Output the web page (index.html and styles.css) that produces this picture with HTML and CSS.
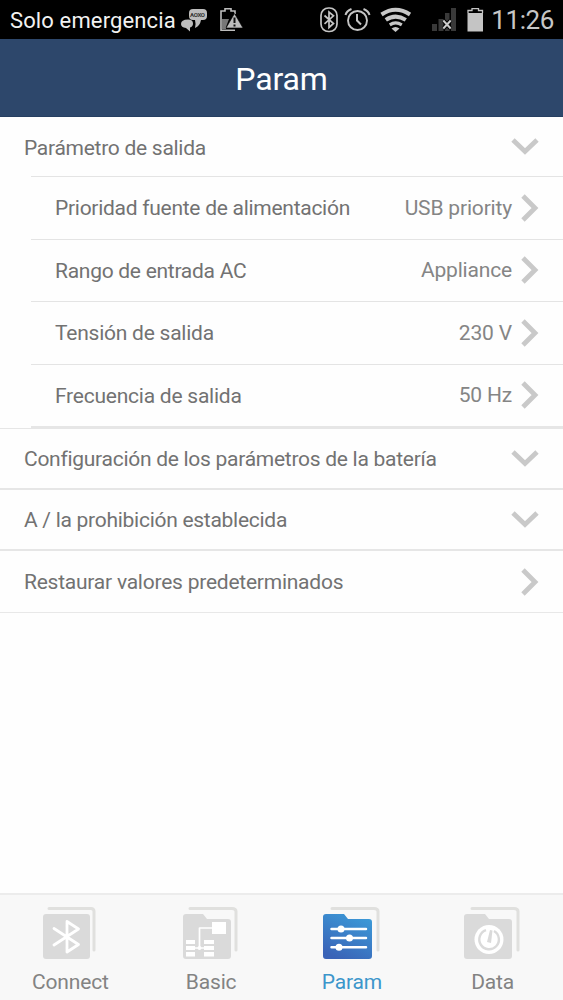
FILE: index.html
```html
<!DOCTYPE html>
<html lang="es">
<head>
<meta charset="utf-8">
<title>Param</title>
<link rel="stylesheet" href="styles.css">
</head>
<body>
<svg class="defs" width="0" height="0">
  <symbol id="right" viewBox="0 0 18 28"><path d="M2 2 14 14 2 26"/></symbol>
  <symbol id="down" viewBox="0 0 28 18"><path d="M2 2 14 13.5 26 2"/></symbol>
</svg>
<div class="statusbar">
  <span class="carrier">Solo emergencia</span>
  <svg class="notify" width="64" height="39" viewBox="180 0 64 39">
    <path fill="#bdbdbd" d="M193 9h10q4 0 4 4v3q0 4-4 4h-2q-1 6-6 8 1-5 0-8h-2q-4 0-4-4v-3q0-4 4-4z"/>
    <path fill="#bdbdbd" d="M188 19.500q5 0 5 4 0 3-3 4v4l-4-3.500q-5-.5-5-4 0-4.500 7-4.500z"/>
    <text x="190" y="17" class="bubble" textLength="15">AOXO</text>
    <path fill="none" stroke="#bdbdbd" stroke-width="1.600" d="M235 30.200h-14V11h4V8.800h6V11h4v3"/>
    <path fill="#777" d="M222 19h7l-3 8v2h-4z"/>
    <path fill="#bdbdbd" stroke="#000" stroke-width=".6" d="M234.500 13.500 243 28h-17z"/>
    <path stroke="#111" stroke-width="2" d="M234.500 17.500v5.500M234.500 24.500v2"/>
  </svg>
  <svg class="system" width="168" height="39" viewBox="319 0 168 39">
    <g fill="none" stroke="#c4c4c4" stroke-width="1.700">
      <rect x="321" y="8" width="16" height="23.500" rx="7.500"/>
      <path d="m324.500 15.500 9 8-4.500 4V12l4.500 3.800-9 8"/>
      <circle cx="357.500" cy="20.500" r="9.500" stroke-width="1.900"/>
      <path d="M357 14v6.500l4 4M345.500 15q1-4 6-6M363.500 9q5 2 6 6" stroke-width="2"/>
    </g>
    <g fill="none" stroke="#c8c8c8" stroke-width="4">
      <path d="M381.500 14.500q14-9.500 28.500 0"/>
      <path d="M385.800 19.900q9.700-6.600 20 0"/>
      <path d="M389.800 24.800q5.700-3.800 12 0" stroke-width="3.200"/>
    </g>
    <path fill="#c8c8c8" d="m391.500 28.500q4-3 8 0l-4 3.500z"/>
    <path fill="#393939" d="M432 24h5v7h-5zm6.500-5h5v12h-5zm6.500-6h4.500v18H445zm6-5h5v23h-5z"/>
    <path d="m443.500 20.500 7 8m0-8-7 8" stroke="#000" stroke-width="4"/>
    <path d="m443.300 20.500 7.400 8m0-8-7.400 8" stroke="#ccc" stroke-width="2"/>
    <path fill="#c4c4c4" d="M467.500 13H483v18.500h-15.500z"/>
    <path fill="none" stroke="#c4c4c4" stroke-width="1.300" d="M468 13v-2.500h4V8.700h6.500v1.800h4V13"/>
  </svg>
  <time class="clock">11:26</time>
</div>
<header class="title"><h1>Param</h1></header>
<main class="list">
  <section class="group">
    <div class="row first"><span>Parámetro de salida</span><svg class="chev down"><use href="#down"/></svg></div>
    <div class="children">
      <div class="row"><span>Prioridad fuente de alimentación</span><span class="value">USB priority</span><svg class="chev"><use href="#right"/></svg></div>
      <div class="row"><span>Rango de entrada AC</span><span class="value">Appliance</span><svg class="chev"><use href="#right"/></svg></div>
      <div class="row"><span class="wide">Tensión de salida</span><span class="value">230 V</span><svg class="chev"><use href="#right"/></svg></div>
      <div class="row"><span class="wide">Frecuencia de salida</span><span class="value">50 Hz</span><svg class="chev"><use href="#right"/></svg></div>
    </div>
  </section>
  <div class="row top battery"><span>Configuración de los parámetros de la batería</span><svg class="chev down"><use href="#down"/></svg></div>
  <div class="row top"><span>A / la prohibición establecida</span><svg class="chev down"><use href="#down"/></svg></div>
  <div class="row top last"><span class="wide">Restaurar valores predeterminados</span><svg class="chev"><use href="#right"/></svg></div>
</main>
<nav class="tabs">
  <div class="tab">
    <svg width="60" height="58" viewBox="0 0 60 58">
      <path class="back" d="M9 4.500h42q3 0 3 3V46"/>
      <rect class="fill" x="3" y="10" width="47" height="45" rx="3"/>
      <path class="ink" stroke-width="2.800" d="M14 24.500 38.500 40.500 27 48V17.500L38.500 25 14 41"/>
    </svg><span>Connect</span>
  </div>
  <div class="tab">
    <svg width="60" height="58" viewBox="0 0 60 58">
      <path class="back" d="M9 4.500h42q4 0 4 3V46"/>
      <path class="fill" d="M5 10h17l4 5h21q3 0 3 3v34q0 3-3 3H5q-3 0-3-3V13q0-3 3-3z"/>
      <path fill="#fff" d="M31 18h14v12H31zM5 36h9v4H5zm0 6h9v4H5zm0 6h9v4.500H5zM23 36h10v4H23zm0 6h10v4H23zm0 6h10v4.500H23z"/>
      <path class="ink" stroke-width="1.700" d="M31 24H18.500v20M14 44h9"/><circle cx="18.500" cy="44" r="2" fill="#fff"/>
    </svg><span>Basic</span>
  </div>
  <div class="tab active">
    <svg width="60" height="58" viewBox="0 0 60 58">
      <defs><linearGradient id="blue" x1=".8" y1="0" x2=".3" y2="1"><stop offset="0" stop-color="#3c9bd8"/><stop offset="1" stop-color="#3a63b7"/></linearGradient></defs>
      <path class="back" d="M10 4.500h42q4 0 4 3V46"/>
      <path fill="url(#blue)" d="M4 10h18l4 5h21q3 0 3 3v34q0 3-3 3H4q-3 0-3-3V13q0-3 3-3z"/>
      <path class="ink" stroke-width="2.500" stroke-linecap="butt" d="M9.500 25H44M9.500 34H44M9.500 43.200H44"/>
      <g fill="#fff"><circle cx="19" cy="25" r="3.500"/><circle cx="27.500" cy="34" r="3.500"/><circle cx="17" cy="43.200" r="3.500"/></g>
    </svg><span>Param</span>
  </div>
  <div class="tab">
    <svg width="60" height="58" viewBox="0 0 60 58">
      <path class="back" d="M9 4.500h42q4 0 4 3V46"/>
      <path class="fill" d="M4 10h18l4 5h20q3 0 3 3v34q0 3-3 3H4q-3 0-3-3V13q0-3 3-3z"/>
      <circle cx="26" cy="35.500" r="14.500" fill="#fff"/>
      <path fill="none" stroke="#dadada" stroke-width="2.400" d="M23 26.200A9.800 9.800 0 1 0 31 27"/>
      <path fill="#dadada" d="m27 26 2.500.5-1.500 12.500-4-1z"/>
    </svg><span>Data</span>
  </div>
</nav>
</body>
</html>
```
FILE: styles.css
```css
* { box-sizing: border-box; }
body {
  margin: 0;
  height: 1000px;
  display: flex;
  flex-direction: column;
  overflow: hidden;
  background: #fefefe;
  color: #727272;
  font-family: Roboto, sans-serif;
  font-size: 21px;
}
.defs { position: absolute; }
.statusbar {
  height: 39px;
  flex: none;
  display: flex;
  align-items: center;
  padding: 1px 9px 0 10px;
  background: #000;
  color: #f2f2f2;
  white-space: nowrap;
}
.carrier { width: 170px; font-size: 22px; letter-spacing: .13px; }
.notify, .system { flex: none; margin-top: -1px; }
.bubble { font-size: 6px; font-weight: 700; fill: #333; }
.system { margin-left: auto; }
.clock { width: 67px; text-align: right; color: #c6c6c6; font-size: 26px; letter-spacing: -.4px; }
.title {
  height: 78px;
  flex: none;
  display: grid;
  place-items: center;
  padding-top: 2px;
  background: #2d476b;
  border-bottom: 1px solid #263f61;
}
.title h1 { margin: 0; color: #fff; font-size: 32px; font-weight: 400; letter-spacing: -.15px; }
.list { flex: 1; }
.row {
  display: flex;
  align-items: center;
  height: 62.5px;
  padding: 0 24px;
  white-space: nowrap;
}
.row > span { padding-top: 1px; letter-spacing: -.275px; }
.row > .wide { letter-spacing: -.235px; }
.first { height: 59px; padding-top: 1px; }
.children { padding-left: 31px; }
.children .row { border-top: 1px solid #e4e4e4; }
.children .row:last-child { height: 64px; border-bottom: 2px solid #e6e6e6; }
.row > .value { margin-left: auto; padding-top: 0; color: #858585; letter-spacing: -.17px; }
.chev {
  flex: none;
  width: 18px;
  height: 28px;
  margin-left: 9px;
  fill: none;
  stroke: #c9c9c9;
  stroke-width: 4.800;
}
.row > span:first-child + .chev { margin-left: auto; }
.chev.down { width: 28px; height: 18px; }
.top { height: 61px; border-top: 2px solid #e6e6e6; }
.battery { height: 60.5px; padding-top: 1px; border-top-width: 1px; }
.last { height: 64px; border-bottom: 1px solid #e8e8e8; }
.tabs {
  display: grid;
  grid-template-columns: repeat(4, 1fr);
  height: 107px;
  flex: none;
  background: #f8f8f8;
  border-top: 2px solid #ececec;
}
.tab { display: flex; flex-direction: column; align-items: center; padding-top: 9px; color: #838383; }
.tab svg { display: block; }
.tab span { margin-top: 8px; letter-spacing: -.15px; }
.tab.active { color: #3c96cb; }
.back { fill: none; stroke: #e0e0de; stroke-width: 3; stroke-linecap: round; }
.fill { fill: #dadada; }
.ink { fill: none; stroke: #fff; stroke-linecap: round; stroke-linejoin: round; }
```
